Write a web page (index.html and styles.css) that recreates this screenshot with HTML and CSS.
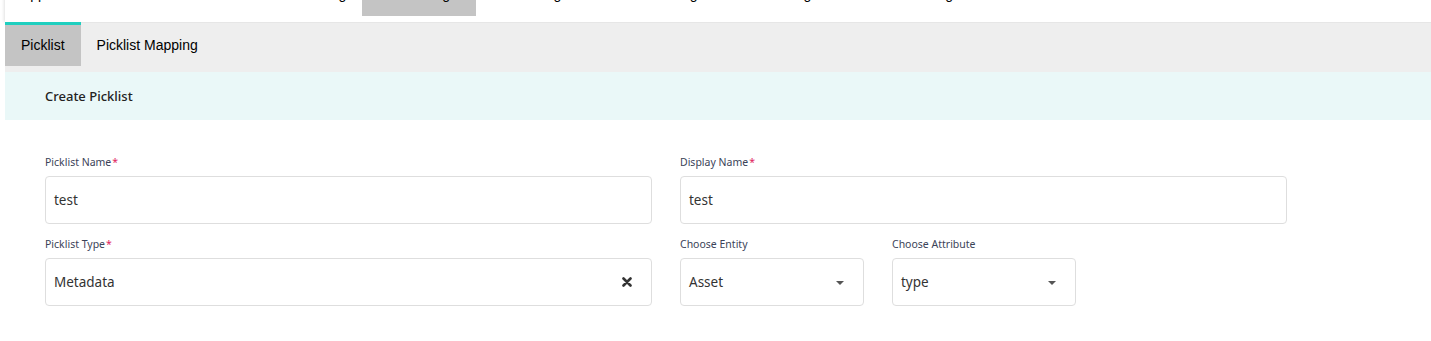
FILE: index.html
```html
<!DOCTYPE html>
<html lang="en">
<head>
  <meta charset="UTF-8" />
  <meta name="viewport" content="width=device-width, initial-scale=1.0" />
  <title>Create Picklist</title>
  <link rel="stylesheet" href="styles.css">
</head>
<body>

  <div class="page">
    <nav class="topnav">
      <a href="#">Applications Overview</a>
      <a href="#">Asset Health Monitoring</a>
      <a href="#" class="active">Site Settings</a>
      <a href="#">Scheduling</a>
      <a href="#">Asset Monitoring</a>
      <a href="#">Data Routing</a>
      <a href="#">Location Tracking</a>
    </nav>

    <div class="subtabs">
      <a href="#" class="active">Picklist</a>
      <a href="#">Picklist Mapping</a>
    </div>

    <div class="section-head">Create Picklist</div>

    <form class="form">
      <div class="field">
        <label>Picklist Name<span class="req">*</span></label>
        <div class="input">test</div>
      </div>

      <div class="field">
        <label>Display Name<span class="req">*</span></label>
        <div class="input">test</div>
      </div>

      <div class="field">
        <label>Picklist Type<span class="req">*</span></label>
        <div class="input select">
          <span>Metadata</span>
          <svg class="clear" width="10" height="10" viewBox="0 0 10 10">
            <path d="M1.5 1.5 L8.5 8.5 M8.5 1.5 L1.5 8.5" stroke="#333" stroke-width="2.6" stroke-linecap="round"/>
          </svg>
        </div>
      </div>

      <div class="pair">
        <div class="field small">
          <label>Choose Entity</label>
          <div class="input select">
            <span>Asset</span>
            <span class="caret"></span>
          </div>
        </div>
        <div class="field small">
          <label>Choose Attribute</label>
          <div class="input select">
            <span>type</span>
            <span class="caret"></span>
          </div>
        </div>
      </div>
    </form>
  </div>

</body>
</html>
```

FILE: styles.css
```css
body {
  margin: 0;
  background-color: white;
  font-family: "Liberation Sans", Arial, sans-serif;
  color: #222;
}

.page {
  margin-left: 5px;
}

/* top navigation, scrolled mostly out of view */
.topnav {
  display: flex;
  height: 50px;
  margin-top: -28px;
  background-color: white;
  box-shadow: -1px 0 3px rgba(0, 0, 0, 0.12);
}

.topnav a {
  height: 44px;
  line-height: 44px;
  padding: 0 16px;
  font-size: 14px;
  color: black;
  text-decoration: none;
  white-space: nowrap;
}

.topnav a:first-child {
  padding-right: 23px;
}

.topnav a.active {
  background-color: #c4c4c4;
  padding-right: 19px;
}

/* second level tabs */
.subtabs {
  display: flex;
  height: 50px;
  background-color: #eeeeee;
  box-shadow: inset 0 1px 0 #e6e6e6;
}

.subtabs a {
  height: 41px;
  line-height: 40px;
  padding: 0 16px;
  border-top: 3px solid transparent;
  font-size: 14px;
  color: black;
  text-decoration: none;
}

.subtabs a.active {
  background-color: #c4c4c4;
  border-top-color: #1fcfbf;
}

.section-head {
  height: 48px;
  line-height: 48px;
  padding-left: 40px;
  background-color: #eaf8f8;
  font-family: "Noto Sans", sans-serif;
  font-size: 13px;
  font-weight: 500;
  color: #222;
}

.form {
  display: grid;
  grid-template-columns: 607px 607px;
  column-gap: 28px;
  row-gap: 12px;
  padding: 34px 40px;
  font-family: "Noto Sans", sans-serif;
}

.field label {
  display: block;
  height: 16px;
  line-height: 16px;
  margin-bottom: 6px;
  font-size: 10.5px;
  color: #3b4358;
}

.req {
  color: #e0245e;
  margin-left: 1px;
}

.input {
  display: flex;
  align-items: center;
  justify-content: space-between;
  height: 48px;
  box-sizing: border-box;
  padding: 0 8px;
  border: 1px solid #dedede;
  border-radius: 4px;
  background-color: white;
  font-size: 13.5px;
  color: #333;
}

.input.select {
  padding-right: 19px;
}

.pair {
  display: flex;
  gap: 28px;
}

.field.small {
  width: 184px;
}

.caret {
  width: 0;
  height: 0;
  border-left: 4px solid transparent;
  border-right: 4px solid transparent;
  border-top: 4px solid #555;
  margin-top: 2px;
}
```
